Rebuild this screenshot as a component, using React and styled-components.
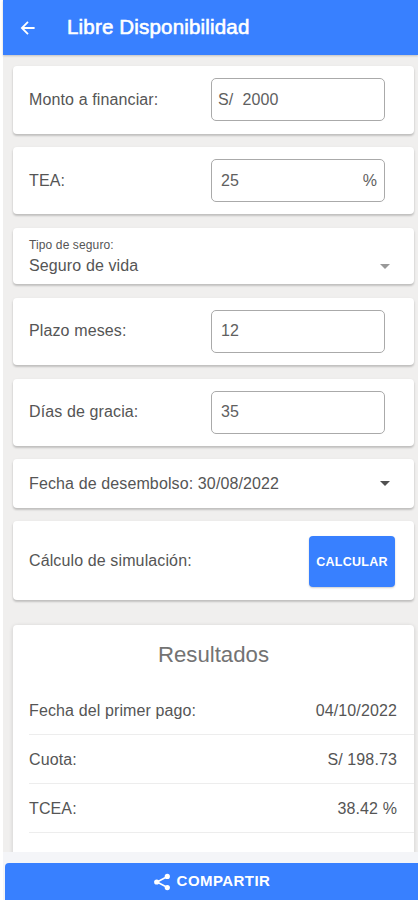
import React from "react";
import styled, { createGlobalStyle } from "styled-components";

const colors = {
  primary: "#3880ff",
  background: "#f0efee",
  text: "#555",
  footer: "#f4f5f8",
};

const GlobalStyle = createGlobalStyle`
  * {
    box-sizing: border-box;
  }

  body {
    margin: 0;
    background: #fff;
    font-family: "Liberation Sans", Arial, sans-serif;
    overflow: hidden;
  }
`;

const Page = styled.div`
  display: flex;
  flex-direction: column;
  height: 900px;
  padding-left: 3px;
  color: ${colors.text};
  font-size: 16px;
  letter-spacing: 0.12px;
`;

const Header = styled.header`
  display: flex;
  flex: none;
  align-items: center;
  height: 55px;
  padding-left: 16px;
  background: ${colors.primary};
  color: #fff;
  box-shadow: 0 1px 2px rgba(0, 0, 0, 0.2);
  z-index: 1;
`;

const BackIcon = styled.svg`
  width: 18px;
  height: 18px;
`;

const PageTitle = styled.h1`
  margin: 0 0 2px 30px;
  font-size: 20.5px;
  font-weight: 400;
  letter-spacing: 0.18px;
  -webkit-text-stroke: 0.6px #fff;
`;

const Content = styled.main`
  flex: 1;
  min-height: 0;
  overflow: hidden;
  padding: 10.5px 4px 0 10px;
  background: ${colors.background};
`;

const Card = styled.section`
  display: flex;
  align-items: center;
  justify-content: space-between;
  height: ${(props) => props.$height}px;
  margin-bottom: ${(props) => props.$gap || 13}px;
  padding: ${(props) => props.$top || 0}px ${(props) => props.$right || 29}px 0
    16px;
  border-radius: 4px;
  background: #fff;
  box-shadow: 0 2px 2px rgba(0, 0, 0, 0.14), 0 1px 3px rgba(0, 0, 0, 0.1);
`;

const Field = styled.div`
  display: flex;
  align-items: center;
  justify-content: space-between;
  width: 174px;
  height: 43px;
  padding: 0 7px 0 ${(props) => props.$left || 9}px;
  border: 1px solid #aaa;
  border-radius: 5px;
  color: #606060;
  white-space: pre;
`;

const SelectText = styled.div`
  display: flex;
  flex-direction: column;
  gap: 5px;
  padding-top: 2px;
  line-height: 18px;
`;

const SmallLabel = styled.span`
  font-size: 12px;
  line-height: 13px;
  letter-spacing: 0.12px;
`;

const Caret = styled.span`
  width: 0;
  height: 0;
  margin-top: ${(props) => props.$top || 0}px;
  margin-right: -5px;
  border: 5px solid transparent;
  border-top-color: ${(props) => props.$color};
  border-bottom: 0;
`;

const CalculateButton = styled.button`
  width: 86px;
  height: 51px;
  padding: 1px 0 0;
  border: 0;
  border-radius: 4px;
  background: ${colors.primary};
  color: #fff;
  font: 700 12.5px "Liberation Sans", Arial, sans-serif;
  letter-spacing: 0.25px;
  box-shadow: 0 1px 2px rgba(0, 0, 0, 0.2);
`;

const Results = styled.section`
  height: 300px;
  margin-top: 25px;
  padding-left: 16px;
  border-radius: 4px;
  background: #fff;
  box-shadow: 0 1px 4px rgba(0, 0, 0, 0.16);
`;

const ResultsTitle = styled.h2`
  height: 61px;
  margin: 0 16px 0 0;
  color: #737373;
  font-size: 22.2px;
  font-weight: 400;
  letter-spacing: 0;
  line-height: 59px;
  text-align: center;
`;

const ResultRow = styled.div`
  display: flex;
  align-items: center;
  justify-content: space-between;
  height: 49px;
  padding: 2px 17px 0 0;
  border-bottom: 1px solid #ededed;
`;

const Footer = styled.footer`
  flex: none;
  height: 48px;
  padding: 11px 0 0 2px;
  background: ${colors.footer};
`;

const ShareButton = styled.button`
  display: flex;
  align-items: center;
  justify-content: center;
  gap: 6px;
  width: 100%;
  height: 37px;
  padding: 0;
  border: 0;
  border-radius: 4px 0 0 0;
  background: ${colors.primary};
  color: #fff;
  font: 700 15px/17px "Liberation Sans", Arial, sans-serif;
  letter-spacing: 0.45px;
`;

const ShareLabel = styled.span`
  padding-bottom: 2px;
`;

const ShareIcon = styled.svg`
  width: 18px;
  height: 18px;
`;

const results = [
  { label: "Fecha del primer pago:", value: "04/10/2022" },
  { label: "Cuota:", value: "S/ 198.73" },
  { label: "TCEA:", value: "38.42 %" },
];

const App = () => {
  return (
    <>
      <GlobalStyle />
      <Page>
        <Header>
          <BackIcon viewBox="0 0 18 18" fill="none" stroke="#fff" strokeWidth="1.8">
            <path d="M15.6 9H3M9 2.9 2.9 9 9 15.1" />
          </BackIcon>
          <PageTitle>Libre Disponibilidad</PageTitle>
        </Header>
        <Content>
          <Card $height={68}>
            <span>Monto a financiar:</span>
            <Field $left={6}>{"S/  2000"}</Field>
          </Card>
          <Card $height={67} $gap={14} $top={1}>
            <span>TEA:</span>
            <Field>
              <span>25</span>
              <span>%</span>
            </Field>
          </Card>
          <Card $height={56} $gap={14}>
            <SelectText>
              <SmallLabel>Tipo de seguro:</SmallLabel>
              <span>Seguro de vida</span>
            </SelectText>
            <Caret $top={21} $color="#999" />
          </Card>
          <Card $height={67} $gap={14}>
            <span>Plazo meses:</span>
            <Field>12</Field>
          </Card>
          <Card $height={67}>
            <span>Días de gracia:</span>
            <Field>35</Field>
          </Card>
          <Card $height={49} $top={1}>
            <span>Fecha de desembolso: 30/08/2022</span>
            <Caret $color="#505050" />
          </Card>
          <Card $height={79} $right={19} $top={2}>
            <span>Cálculo de simulación:</span>
            <CalculateButton>CALCULAR</CalculateButton>
          </Card>
          <Results>
            <ResultsTitle>Resultados</ResultsTitle>
            {results.map((el) => (
              <ResultRow key={el.label}>
                <span>{el.label}</span>
                <span>{el.value}</span>
              </ResultRow>
            ))}
          </Results>
        </Content>
        <Footer>
          <ShareButton>
            <ShareIcon viewBox="0 0 18 18" fill="#fff">
              <path d="M14.5 3.5 4 9l10.5 5.5" fill="none" stroke="#fff" strokeWidth="1.6" />
              <circle cx="14.3" cy="3.4" r="2.6" />
              <circle cx="3.7" cy="9" r="2.6" />
              <circle cx="14.3" cy="14.6" r="2.6" />
            </ShareIcon>
            <ShareLabel>COMPARTIR</ShareLabel>
          </ShareButton>
        </Footer>
      </Page>
    </>
  );
};

export default App;
